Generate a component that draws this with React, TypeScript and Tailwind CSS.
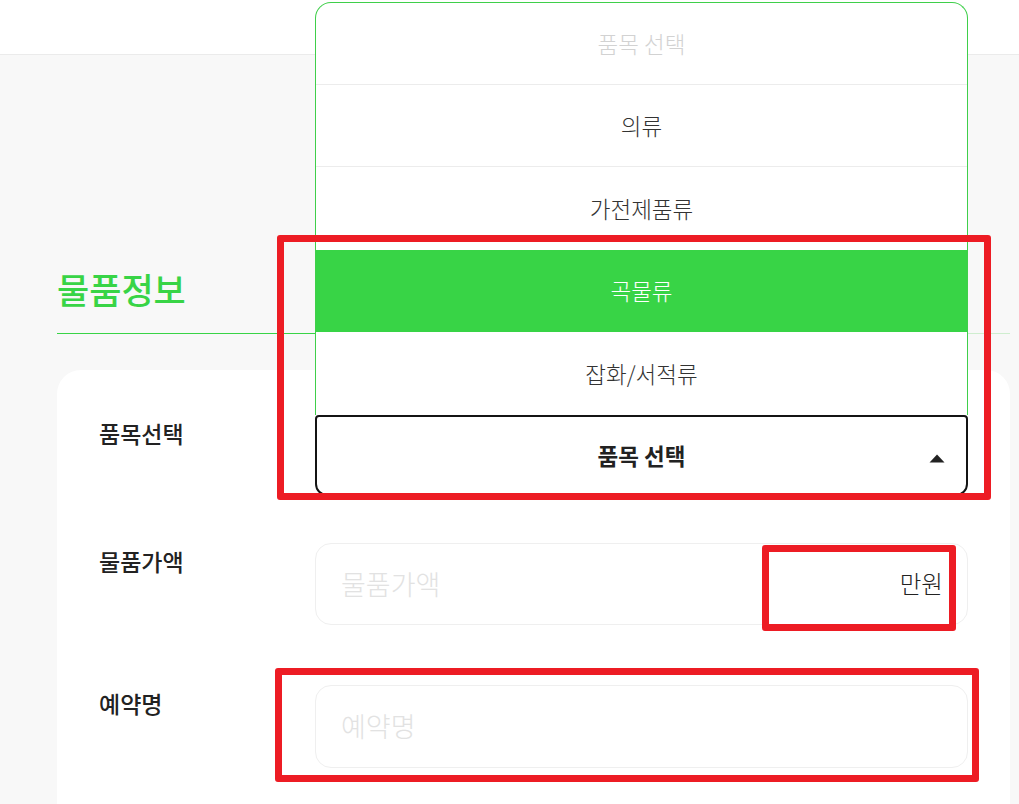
import React from "react";

export default function App() {
  return (
    <div className="relative h-[804px] overflow-hidden bg-[#f8f8f8] font-['Noto_Sans_CJK_KR','Noto_Sans',sans-serif] text-[#222]">
      <header className="h-[55px] border-b border-[#ebebeb] bg-white" />
      <main className="pl-[57px] pr-[9px]">
        <h2 className="mt-[209px] text-[35px] leading-[50px] font-medium text-[#38d446]">물품정보</h2>
        <div className="mt-[19px] h-px bg-[linear-gradient(to_right,#38d446_95.6%,#cfeecf_95.6%)]" />
        <div className="mt-[36px] h-[434px] rounded-t-[24px] bg-white pl-[42px] pr-[42px] pt-[45px]">
          <div className="grid grid-cols-[216px_1fr]">
            <div className="text-[23px] leading-[36px] font-medium">품목선택</div>
            <div className="relative">
              <div className="absolute bottom-full left-0 right-0 overflow-hidden rounded-t-[16px] border border-b-0 border-[#3fcf4a] bg-white text-[22.5px] font-light">
                <div className="flex h-[82px] items-center justify-center border-b border-[#ececec] text-[#d2d2d2]">품목 선택</div>
                <div className="flex h-[82px] items-center justify-center border-b border-[#ececec] text-[#333]">의류</div>
                <div className="flex h-[83px] items-center justify-center text-[#333]">가전제품류</div>
                <div className="flex h-[82px] items-center justify-center bg-[#38d446] text-white">곡물류</div>
                <div className="flex h-[83px] items-center justify-center text-[#333]">잡화/서적류</div>
              </div>
              <div className="relative flex h-[81px] items-center justify-center rounded-t-[4px] rounded-b-[12px] border-2 border-[#141414] bg-white">
                <span className="text-[22.5px] font-bold text-[#222]">품목 선택</span>
                <svg className="absolute right-[21px] top-[37px]" width="16" height="9" viewBox="0 0 16 9">
                  <path d="M8 0.5 L15.5 8.5 L0.5 8.5 Z" fill="#222" />
                </svg>
              </div>
            </div>

            <div className="mt-[47px] text-[23px] leading-[36px] font-medium">물품가액</div>
            <div className="mt-[47px] flex h-[82px] items-center justify-between rounded-[16px] border border-[#efefef] bg-white pl-[25px] pr-[24px]">
              <span className="text-[27px] font-light text-[#e2e2e2]">물품가액</span>
              <span className="text-[23.5px] font-light text-[#222]">만원</span>
            </div>

            <div className="mt-[60px] text-[23px] leading-[36px] font-medium">예약명</div>
            <div className="mt-[60px] flex h-[83px] items-center rounded-[16px] border border-[#efefef] bg-white pl-[25px]">
              <span className="text-[27px] font-light text-[#e2e2e2]">예약명</span>
            </div>
          </div>
        </div>
      </main>

      <div className="pointer-events-none absolute left-[277px] top-[235px] h-[265px] w-[714px] rounded-[3px] border-[7px] border-[#ed1c24]" />
      <div className="pointer-events-none absolute left-[762px] top-[545px] h-[86px] w-[194px] rounded-[3px] border-[7px] border-[#ed1c24]" />
      <div className="pointer-events-none absolute left-[275px] top-[668px] h-[114px] w-[704px] rounded-[3px] border-[7px] border-[#ed1c24]" />
    </div>
  );
}
